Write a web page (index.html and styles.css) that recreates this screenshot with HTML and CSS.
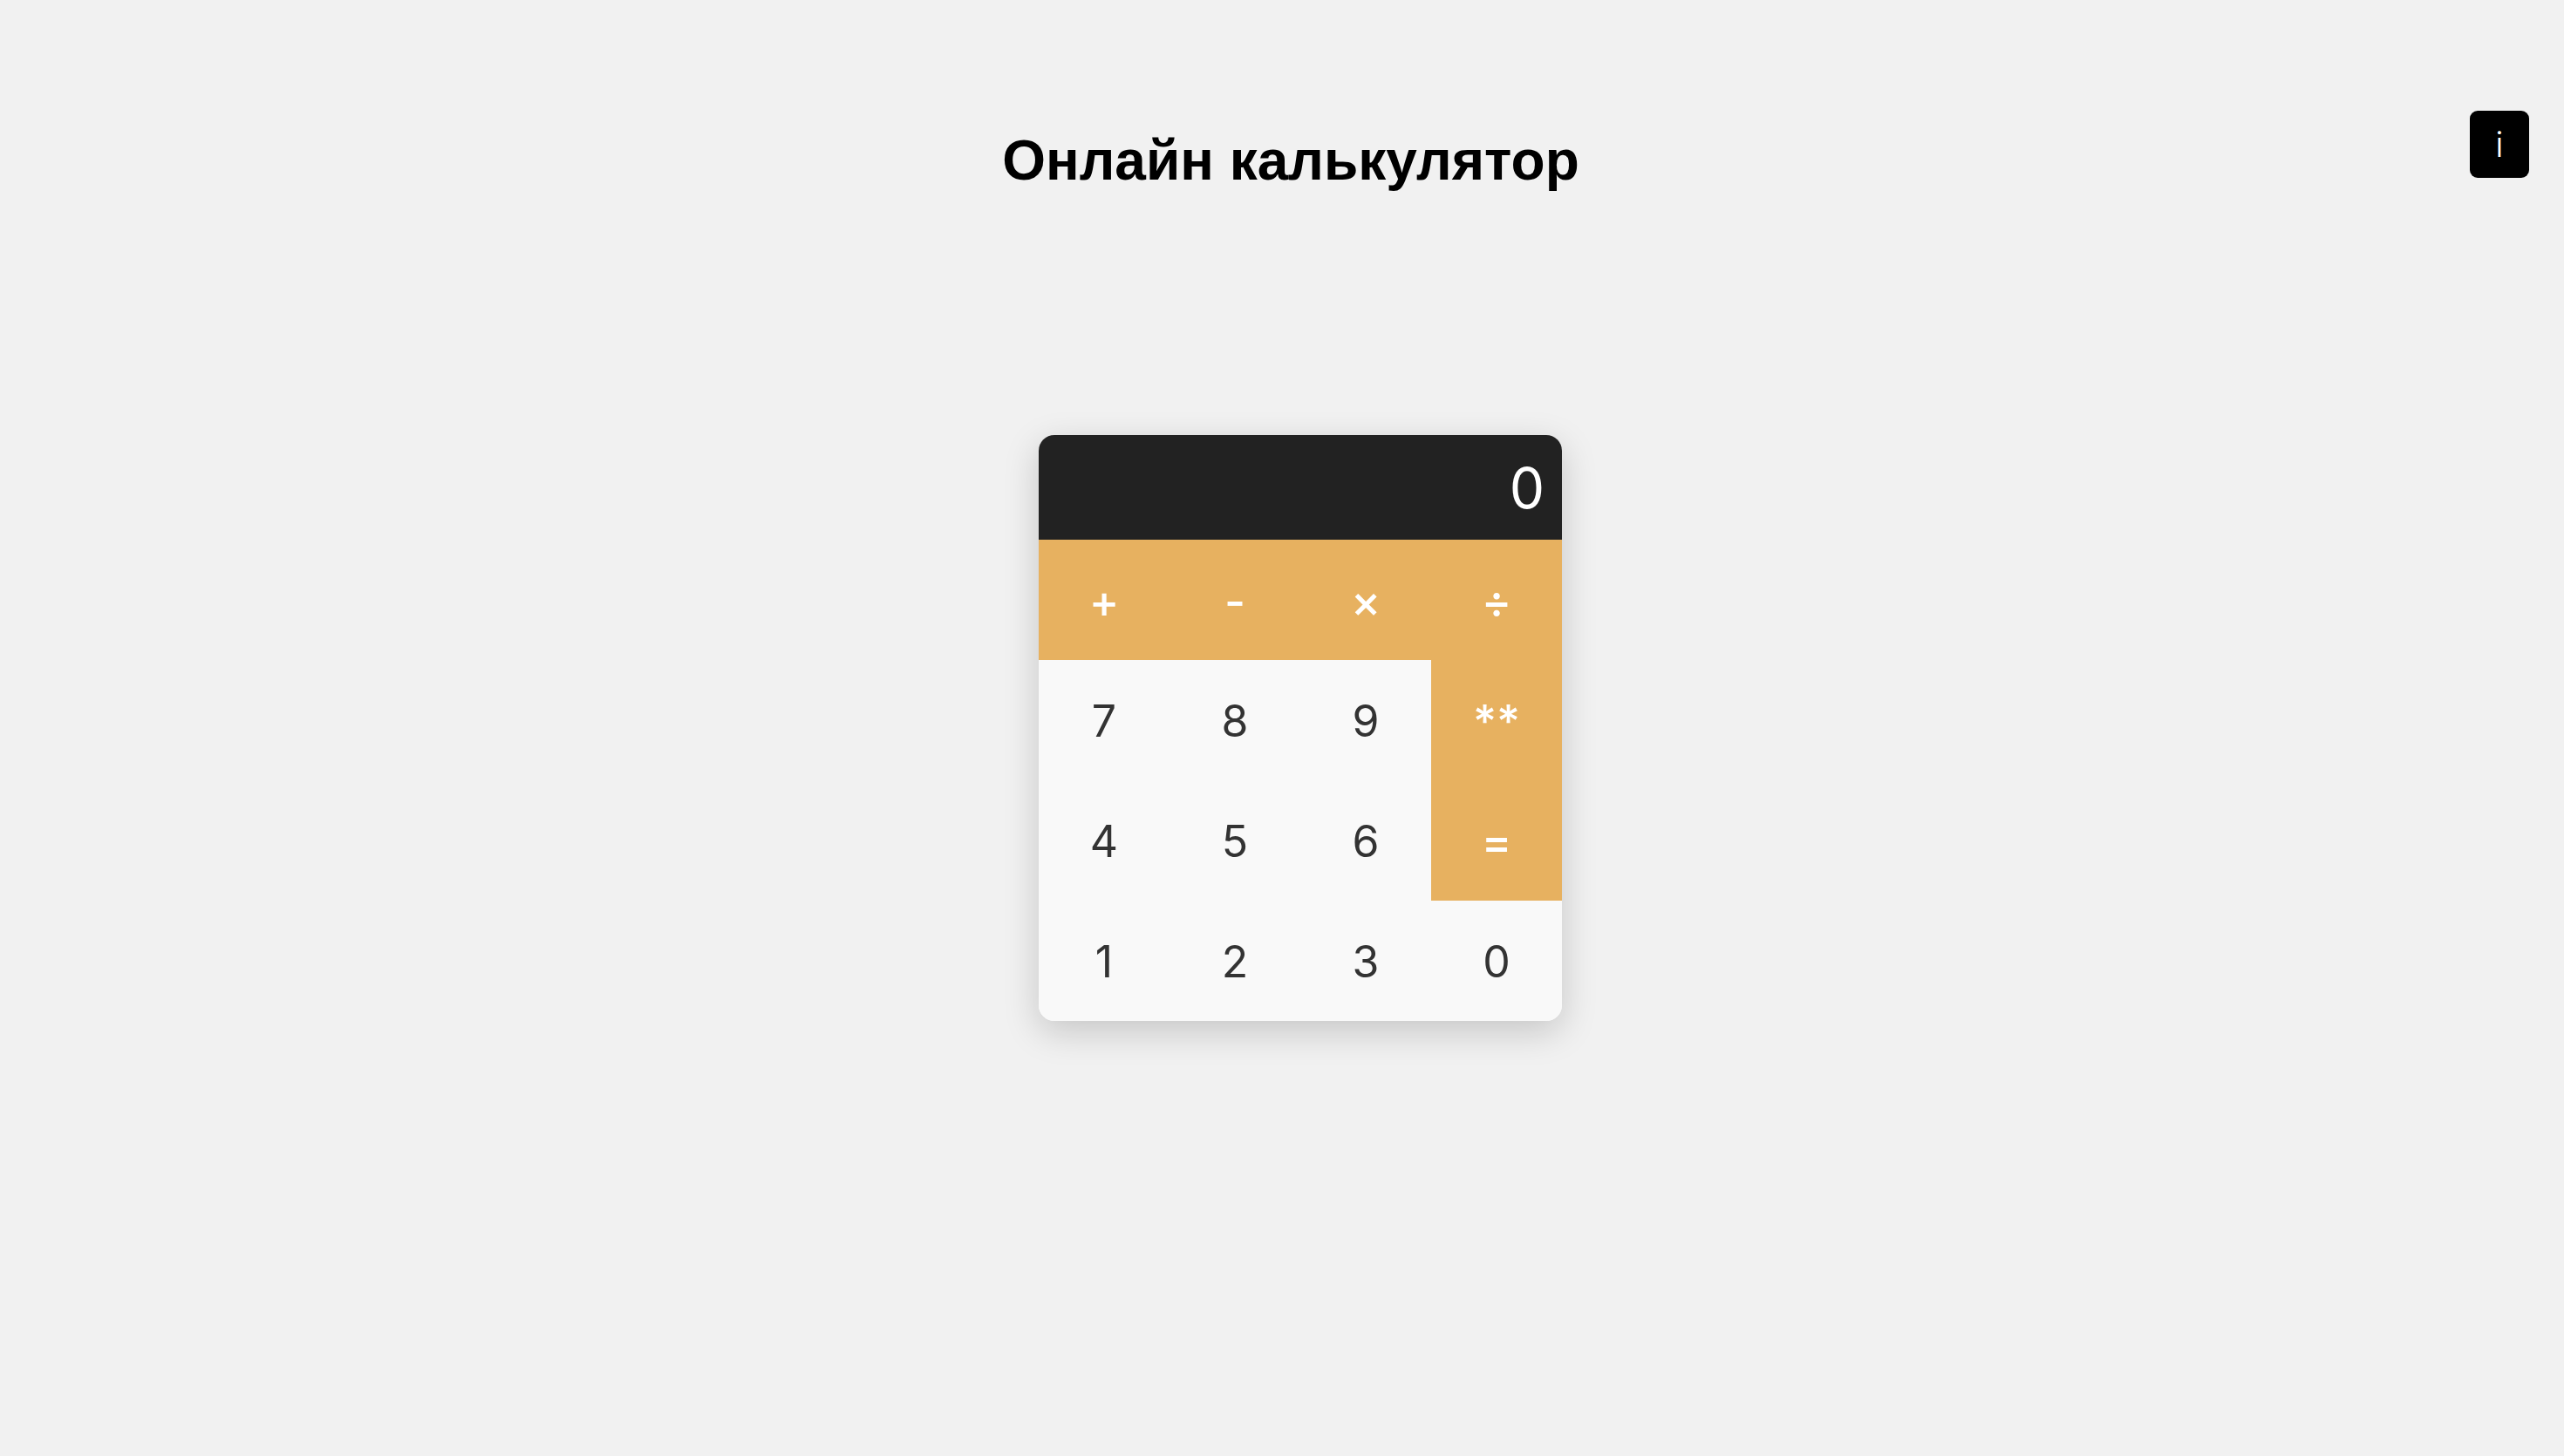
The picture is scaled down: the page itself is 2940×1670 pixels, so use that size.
FILE: index.html
```html
<!DOCTYPE html>
<html lang="ru">
<head>
<meta charset="utf-8">
<title>Онлайн калькулятор</title>
<link rel="stylesheet" href="styles.css">
</head>
<body>
<button class="info">i</button>
<header class="header">
  <h1 class="title">Онлайн калькулятор</h1>
</header>
<main class="main">
  <div class="calc">
    <div class="display">0</div>
    <div class="keys">
      <button class="key op">+</button>
      <button class="key op">-</button>
      <button class="key op">×</button>
      <button class="key op">÷</button>
      <button class="key">7</button>
      <button class="key">8</button>
      <button class="key">9</button>
      <button class="key op">**</button>
      <button class="key">4</button>
      <button class="key">5</button>
      <button class="key">6</button>
      <button class="key op">=</button>
      <button class="key">1</button>
      <button class="key">2</button>
      <button class="key">3</button>
      <button class="key">0</button>
    </div>
  </div>
</main>
</body>
</html>
```
FILE: styles.css
```css
html, body {
  margin: 0;
  padding: 0;
}
body {
  background: #f1f1f1;
  min-height: 1670px;
  font-family: Inter, "Noto Sans", sans-serif;
}
.info {
  position: absolute;
  top: 127px;
  right: 40px;
  width: 68px;
  height: 77px;
  border: none;
  border-radius: 9px;
  background: #000;
  color: #fff;
  font-family: Inter, "Noto Sans", sans-serif;
  font-size: 40px;
  font-weight: 300;
  padding: 0;
  display: flex;
  align-items: center;
  justify-content: center;
}
.header {
  display: flex;
  justify-content: center;
  padding-top: 144px;
  padding-left: 20px;
}
.title {
  margin: 0;
  font-family: "Liberation Sans", Arial, sans-serif;
  font-weight: 700;
  font-size: 64px;
  line-height: 80px;
  color: #000;
}
.main {
  display: flex;
  justify-content: center;
  padding-top: 275px;
  padding-left: 42px;
}
.calc {
  width: 600px;
  border-radius: 18px;
  overflow: hidden;
  box-shadow: 0 12px 40px rgba(0, 0, 0, 0.18);
  background: #f9f9f9;
}
.display {
  height: 120px;
  background: #222;
  color: #fff;
  font-size: 64px;
  font-weight: 400;
  display: flex;
  align-items: center;
  justify-content: flex-end;
  padding: 0 20px;
}
.keys {
  display: grid;
  grid-template-columns: repeat(4, 150px);
  grid-auto-rows: 138px;
}
.key {
  border: none;
  margin: 0;
  padding: 2px 0 0;
  background: #f9f9f9;
  color: #333;
  font-family: Inter, "Noto Sans", sans-serif;
  font-size: 50px;
  font-weight: 400;
  display: flex;
  align-items: center;
  justify-content: center;
}
.key.op {
  background: #e7b160;
  color: #fff;
  font-size: 52px;
  font-weight: 500;
}
```
